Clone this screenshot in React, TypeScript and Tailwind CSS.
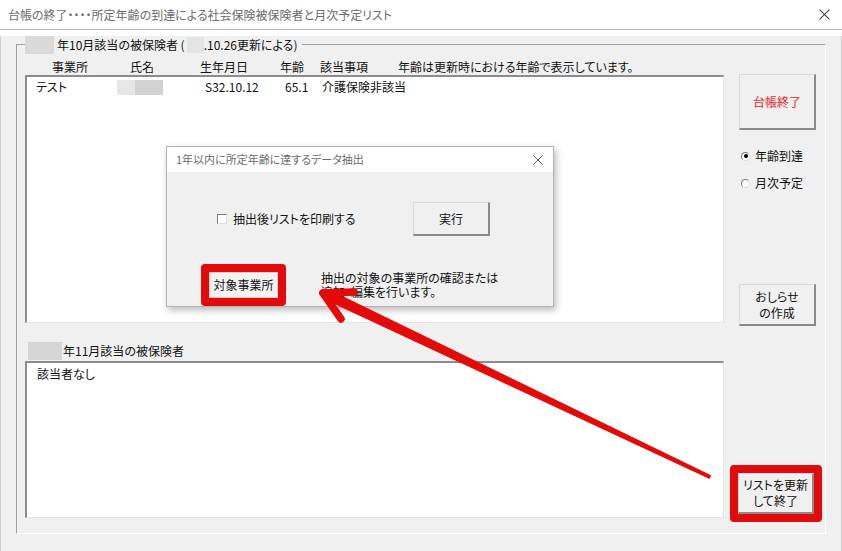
import type { ReactNode } from "react";

const FONT = "font-['Noto_Sans_CJK_JP','Noto_Sans',sans-serif] [font-feature-settings:'palt']";

function WinButton({ className = "", children }: { className?: string; children: ReactNode }) {
  return (
    <div
      className={`flex items-center justify-center text-center bg-[#f0f0f0] border-t border-l border-[#dadada] border-r-2 border-b-2 border-r-[#8a8a8a] border-b-[#8a8a8a] text-[12px] leading-[16px] ${className}`}
    >
      {children}
    </div>
  );
}

function Radio({ checked, label }: { checked?: boolean; label: string }) {
  return (
    <div className="flex items-center h-4 gap-[5px] pl-[2px]">
      <span className="w-[9px] h-[9px] rounded-full bg-white border border-t-[#7a7a7a] border-l-[#7a7a7a] border-r-[#dcdcdc] border-b-[#dcdcdc] flex items-center justify-center">
        {checked && <span className="w-[4px] h-[4px] rounded-full bg-black" />}
      </span>
      <span className="text-[12px] leading-4">{label}</span>
    </div>
  );
}

function CloseX({ size = 10, color = "#333" }: { size?: number; color?: string }) {
  return (
    <svg width={size} height={size} viewBox="0 0 10 10">
      <path d="M0.5 0.5 L9.5 9.5 M9.5 0.5 L0.5 9.5" stroke={color} strokeWidth="1" />
    </svg>
  );
}

export default function App() {
  return (
    <div className={`relative w-[842px] h-[551px] overflow-hidden bg-white text-[#111] ${FONT}`}>
      {/* タイトルバー */}
      <div className="h-[30px] flex items-center justify-between pl-2 pr-[12px] border-b border-[#b9b9b9] bg-white">
        <span className="text-[12px] text-[#6b6b6b]">
          台帳の終了・・・・所定年齢の到達による社会保険被保険者と月次予定リスト
        </span>
        <CloseX size={11} color="#444" />
      </div>

      {/* クライアント領域 */}
      <div className="h-[517px] bg-[#f0f0f0] border-x border-b border-[#cfcfcf] px-[15px]">
        <fieldset className="mt-[6px] h-[498px] border-t border-l border-[#a0a0a0] border-r border-b border-r-white border-b-white px-0 flex">
          <legend className="ml-[8px] pr-[5px] flex items-center h-[17px] text-[12px] leading-[17px]">
            <span className="w-[29px] h-[18px] bg-[#d9d9d9] mr-[3px]" />
            <span>年10月該当の被保険者 (</span>
            <span className="w-[17px] h-[16px] bg-[#e4e4e4] ml-[2px]" />
            <span>.10.26更新による)</span>
          </legend>

          {/* 左側：リスト */}
          <div className="ml-[8px] w-[699px] flex flex-col">
            <div className="mt-[6px] h-4 flex items-center pl-[27px] text-[12px] leading-4 whitespace-nowrap">
              <span className="w-[78px]">事業所</span>
              <span className="w-[70px]">氏名</span>
              <span className="w-[80px]">生年月日</span>
              <span className="w-[40px]">年齢</span>
              <span className="w-[78px]">該当事項</span>
              <span>年齢は更新時における年齢で表示しています。</span>
            </div>
            <div className="h-[248px] bg-white border-t-2 border-l-2 border-[#8c8c8c] border-r border-b border-r-[#e3e3e3] border-b-[#e3e3e3]">
              <div className="flex items-center h-[16px] mt-[2px] pl-[9px] text-[12px] leading-4 whitespace-nowrap">
                <span className="w-[81px]">テスト</span>
                <span className="w-[18px] h-[15px] bg-[#e6e6e6]" />
                <span className="w-[28px] h-[15px] bg-[#d2d2d2]" />
                <span className="w-[42px]" />
                <span className="w-[80px]">S32.10.12</span>
                <span className="w-[37px]">65.1</span>
                <span>介護保険非該当</span>
              </div>
            </div>

            <div className="mt-[18px] h-[20px] flex items-center text-[12px] leading-4">
              <span className="ml-[3px] w-[34px] h-[18px] bg-[#d6d6d6] mr-px" />
              <span>年11月該当の被保険者</span>
            </div>
            <div className="h-[157px] bg-white border-t-2 border-l-2 border-[#8c8c8c] border-r border-b border-r-[#e3e3e3] border-b-[#e3e3e3]">
              <div className="pl-[10px] mt-[3px] text-[12px] leading-4">該当者なし</div>
            </div>
          </div>

          {/* 右側：ボタン */}
          <div className="ml-[15px] w-[77px] flex flex-col">
            <WinButton className="mt-[21px] h-[56px] text-[#e4262a]">台帳終了</WinButton>
            <div className="mt-[18px]">
              <Radio checked label="年齢到達" />
            </div>
            <div className="mt-[11px]">
              <Radio label="月次予定" />
            </div>
            <WinButton className="mt-[93px] h-[42px]">
              おしらせ
              <br />
              の作成
            </WinButton>
            <div className="mt-[139px] -ml-[9px] w-[92px] h-[57px] border-[8px] border-[#e10b0b] rounded-[4px] flex">
              <WinButton className="w-[76px] h-[41px]">
                リストを更新
                <br />
                して終了
              </WinButton>
            </div>
          </div>
        </fieldset>
      </div>

      {/* データ抽出ダイアログ */}
      <div className="absolute left-[166px] top-[146px] w-[388px] h-[161px] border border-[#b3b3b3] bg-[#f0f0f0] shadow-[2px_3px_7px_rgba(0,0,0,0.28)] flex flex-col">
        <div className="h-[27px] bg-white flex items-center justify-between pl-[9px] pr-[10px]">
          <span className="text-[11px] text-[#6b6b6b]">1年以内に所定年齢に達するデータ抽出</span>
          <CloseX size={10} color="#555" />
        </div>
        <div className="flex-1 flex flex-col">
          <div className="mt-[30px] flex items-center pl-[50px]">
            <div className="w-[196px] flex items-center gap-[6px]">
              <span className="w-[10px] h-[10px] bg-white border border-t-[#7a7a7a] border-l-[#7a7a7a] border-r-[#dcdcdc] border-b-[#dcdcdc]" />
              <span className="text-[12px] leading-4">抽出後リストを印刷する</span>
            </div>
            <WinButton className="w-[77px] h-[34px]">実行</WinButton>
          </div>
          <div className="mt-[28px] flex items-start pl-[34px]">
            <div className="w-[85px] h-[42px] border-[8px] border-[#e10b0b] rounded-[4px] flex">
              <WinButton className="w-[69px] h-[26px] !border-r !border-b !border-[#cfcfcf] bg-[#f2f2f2]">対象事業所</WinButton>
            </div>
            <div className="ml-[35px] mt-[7px] text-[12px] leading-[14px]">
              抽出の対象の事業所の確認または
              <br />
              追加・編集を行います。
            </div>
          </div>
        </div>
      </div>

      {/* 注釈の矢印 */}
      <svg className="absolute inset-0 pointer-events-none" width="842" height="551" viewBox="0 0 842 551">
        <g fill="#e30a0a" stroke="#e30a0a" strokeLinecap="round" strokeLinejoin="round">
          <polygon points="332.1,291.5 710.6,475.6 709.4,478.4 327.9,300.5" strokeWidth="1" />
          <line x1="323" y1="293" x2="354" y2="292" strokeWidth="7.5" />
          <line x1="323" y1="293" x2="341" y2="319" strokeWidth="7.5" />
        </g>
      </svg>
    </div>
  );
}
